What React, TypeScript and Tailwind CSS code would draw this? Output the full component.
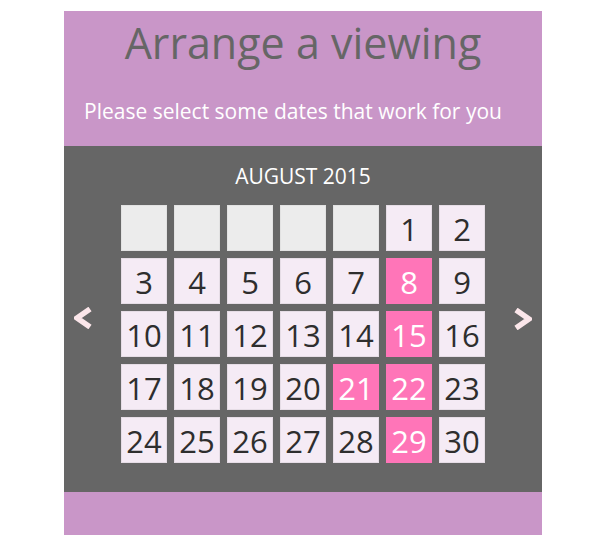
import React, { useState } from 'react';

const FONT = { fontFamily: '"Open Sans", "Noto Sans", sans-serif' };

// August 2015 starts on a Saturday (Monday-first grid)
const LEADING_BLANKS = 5;
const DAYS_IN_MONTH = 30;

const Chevron: React.FC<{ dir: 'left' | 'right' }> = ({ dir }) => (
  <svg width="18" height="22" viewBox="0 0 18 22" fill="none">
    <polyline
      points={dir === 'left' ? '16,2 3,11 16,20' : '2,2 15,11 2,20'}
      stroke="#fbe6ea"
      strokeWidth="5.5"
      strokeLinejoin="miter"
      strokeLinecap="butt"
    />
  </svg>
);

export default function App() {
  const [selected, setSelected] = useState<number[]>([8, 15, 21, 22, 29]);

  const toggle = (day: number) => {
    setSelected(prev =>
      prev.includes(day) ? prev.filter(d => d !== day) : [...prev, day]
    );
  };

  const cells: (number | null)[] = [
    ...Array.from({ length: LEADING_BLANKS }, () => null),
    ...Array.from({ length: DAYS_IN_MONTH }, (_, i) => i + 1),
  ];

  return (
    <div className="min-h-[555px] bg-white pt-[11px]" style={FONT}>
      <div className="ml-[64px] w-[478px]">
        <div className="h-[135px] bg-[#c996c8] flex flex-col items-center">
          <h1 className="mt-[7px] text-[43px] leading-[50px] text-[#666666]">
            Arrange a viewing
          </h1>
          <p className="mt-[30px] pr-[20px] text-[21px] leading-[26px] text-white">
            Please select some dates that work for you
          </p>
        </div>

        <div className="h-[346px] bg-[#666666] flex flex-col items-center">
          <div className="mt-[17px] text-[21px] leading-[26px] text-white">
            AUGUST 2015
          </div>
          <div className="mt-[16px] w-full flex items-start justify-between px-[8px]">
            <button type="button" className="mt-[102px] w-[22px] flex justify-center">
              <Chevron dir="left" />
            </button>
            <div className="grid grid-cols-7 gap-[7px]">
              {cells.map((day, i) => {
                if (day === null) {
                  return (
                    <div
                      key={i}
                      className="w-[46px] h-[46px] bg-[#ececec] border border-[#e2e2e2]"
                    />
                  );
                }
                const isOn = selected.includes(day);
                return (
                  <button
                    type="button"
                    key={i}
                    onClick={() => toggle(day)}
                    className={
                      isOn
                        ? 'w-[46px] h-[46px] bg-[#ff75b8] text-white text-[31px] leading-none flex items-center justify-center pt-[3px]'
                        : 'w-[46px] h-[46px] bg-[#f5ebf5] border border-[#e6dde6] text-[#2e2e2e] text-[31px] leading-none flex items-center justify-center pt-[3px]'
                    }
                  >
                    {day}
                  </button>
                );
              })}
            </div>
            <button type="button" className="mt-[103px] w-[22px] flex justify-center">
              <Chevron dir="right" />
            </button>
          </div>
        </div>

        <div className="h-[43px] bg-[#c996c8]" />
      </div>
    </div>
  );
}
